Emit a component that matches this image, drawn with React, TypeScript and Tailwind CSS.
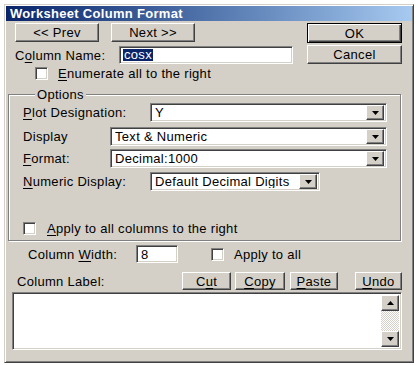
import React from 'react'
import clsx from 'clsx'

// Win2000-style "Worksheet Column Format" dialog

const raised =
  'bg-[#d4d0c8] border border-t-white border-l-white border-r-[#404040] border-b-[#404040] shadow-[inset_-1px_-1px_0_#808080]'
const sunken =
  'bg-white border border-t-[#808080] border-l-[#808080] border-r-white border-b-white shadow-[inset_1px_1px_0_#404040,inset_-1px_-1px_0_#d4d0c8]'

function Btn({ children, className, isDefault }: { children: React.ReactNode; className?: string; isDefault?: boolean }) {
  return (
    <button
      className={clsx(
        'flex items-center justify-center text-[13px] tracking-[0.3px] text-black leading-none',
        isDefault
          ? 'bg-[#d4d0c8] border border-black shadow-[inset_1px_1px_0_#fff,inset_-1px_-1px_0_#404040,inset_-2px_-2px_0_#808080]'
          : raised,
        className,
      )}
    >
      {children}
    </button>
  )
}

function Check({ className }: { className?: string }) {
  return <span className={clsx('block w-[13px] h-[13px] shrink-0', sunken, className)} />
}

function Arrow({ up }: { up?: boolean }) {
  return (
    <svg width="7" height="4" viewBox="0 0 7 4" className={up ? 'rotate-180' : ''}>
      <path d="M0 0h7L3.5 4z" fill="#000" />
    </svg>
  )
}

function Select({ value, className }: { value: string; className?: string }) {
  return (
    <div className={clsx('flex items-center h-[19px] p-[2px] pl-[4px]', sunken, className)}>
      <span className="flex-1 text-[13px] tracking-[0.3px] leading-none truncate">{value}</span>
      <span className={clsx('flex items-center justify-center w-[18px] h-[15px]', raised)}>
        <Arrow />
      </span>
    </div>
  )
}

const U = ({ children }: { children: React.ReactNode }) => <span className="underline underline-offset-2">{children}</span>

export default function App() {
  return (
    <div className="w-[418px] h-[365px] bg-white pt-[4px] pl-[4px] font-['Liberation_Sans',Arial,sans-serif] text-[13px] leading-[15px] tracking-[0.3px] text-black">
      <div className="w-[410px] h-[359px] p-[1px] bg-[#d4d0c8] border border-t-[#d4d0c8] border-l-[#d4d0c8] border-r-[#404040] border-b-[#404040] shadow-[inset_1px_1px_0_#fff,inset_-1px_-1px_0_#808080]">
        {/* title bar */}
        <div className="h-[15px] flex items-center pl-[4px] bg-gradient-to-r from-[#0a246a] to-[#a6caf0] text-white font-bold text-[13px] leading-none">
          Worksheet Column Format
        </div>

        {/* top section */}
        <div className="flex mt-[2px]">
          <div className="flex flex-col ml-[9px]">
            <div className="flex gap-[12px]">
              <Btn className="w-[84px] h-[19px]">&lt;&lt; Prev</Btn>
              <Btn className="w-[84px] h-[19px]">Next &gt;&gt;</Btn>
            </div>
            <div className="flex items-center mt-[4px]">
              <span className="w-[104px]">
                C<U>o</U>lumn Name:
              </span>
              <div className={clsx('w-[174px] h-[18px] flex items-center pl-[3px]', sunken)}>
                <span className="bg-[#0a246a] text-white leading-[12px] px-[1px]">cosx</span>
              </div>
            </div>
            <div className="flex items-center mt-[2px] ml-[20px]">
              <Check />
              <span className="ml-[10px]">
                <U>E</U>numerate all to the right
              </span>
            </div>
          </div>
          <div className="flex flex-col ml-auto mr-[10px] gap-[2px]">
            <Btn isDefault className="w-[95px] h-[20px]">OK</Btn>
            <Btn className="w-[95px] h-[19px]">Cancel</Btn>
          </div>
        </div>

        {/* options group */}
        <fieldset className="ml-[2px] mt-[6px] w-[393px] h-[154px] border border-[#808080] shadow-[1px_1px_0_#fff,inset_1px_1px_0_#fff] pl-[14px]">
          <legend className="ml-[12px] px-[2px] bg-[#d4d0c8] leading-[15px]">Options</legend>
          <div className="flex items-center mt-[1px]">
            <span className="w-[127px]">
              <U>P</U>lot Designation:
            </span>
            <Select value="Y" className="w-[237px]" />
          </div>
          <div className="flex items-center mt-[5px]">
            <span className="w-[87px]">Display</span>
            <Select value="Text & Numeric" className="w-[277px]" />
          </div>
          <div className="flex items-center mt-[3px]">
            <span className="w-[87px]">
              <U>F</U>ormat:
            </span>
            <Select value="Decimal:1000" className="w-[277px]" />
          </div>
          <div className="flex items-center mt-[4px]">
            <span className="w-[127px]">
              <U>N</U>umeric Display:
            </span>
            <Select value="Default Decimal Digits" className="w-[170px]" />
          </div>
          <div className="flex items-center mt-[30px]">
            <Check />
            <span className="ml-[11px]">
              <U>A</U>pply to all columns to the right
            </span>
          </div>
        </fieldset>

        {/* column width */}
        <div className="flex items-center mt-[4px] ml-[22px] h-[18px]">
          <span className="w-[108px]">
            Column <U>W</U>idth:
          </span>
          <div className={clsx('w-[42px] h-[18px] flex items-center pl-[4px]', sunken)}>8</div>
          <Check className="ml-[33px]" />
          <span className="ml-[10px]">
            App<U>l</U>y to all
          </span>
        </div>

        {/* column label */}
        <div className="flex items-center mt-[9px] h-[18px]">
          <span className="ml-[11px] w-[165px]">Column Label:</span>
          <Btn className="w-[49px] h-[18px]">
            C<U>u</U>t
          </Btn>
          <Btn className="w-[50px] h-[18px] ml-[4px]">
            <U>C</U>opy
          </Btn>
          <Btn className="w-[48px] h-[18px] ml-[5px]">
            <U>P</U>aste
          </Btn>
          <Btn className="w-[47px] h-[18px] ml-[17px]">
            <U>U</U>ndo
          </Btn>
        </div>

        <div className={clsx('ml-[6px] mt-[2px] w-[390px] h-[58px] flex justify-end p-[2px]', sunken)}>
          <div className="w-[18px] flex flex-col bg-[repeating-conic-gradient(#fff_0_25%,#d4d0c8_0_50%)] bg-[length:2px_2px]">
            <span className={clsx('h-[16px] flex items-center justify-center', raised)}>
              <Arrow up />
            </span>
            <span className="flex-1" />
            <span className={clsx('h-[16px] flex items-center justify-center', raised)}>
              <Arrow />
            </span>
          </div>
        </div>
      </div>
    </div>
  )
}
